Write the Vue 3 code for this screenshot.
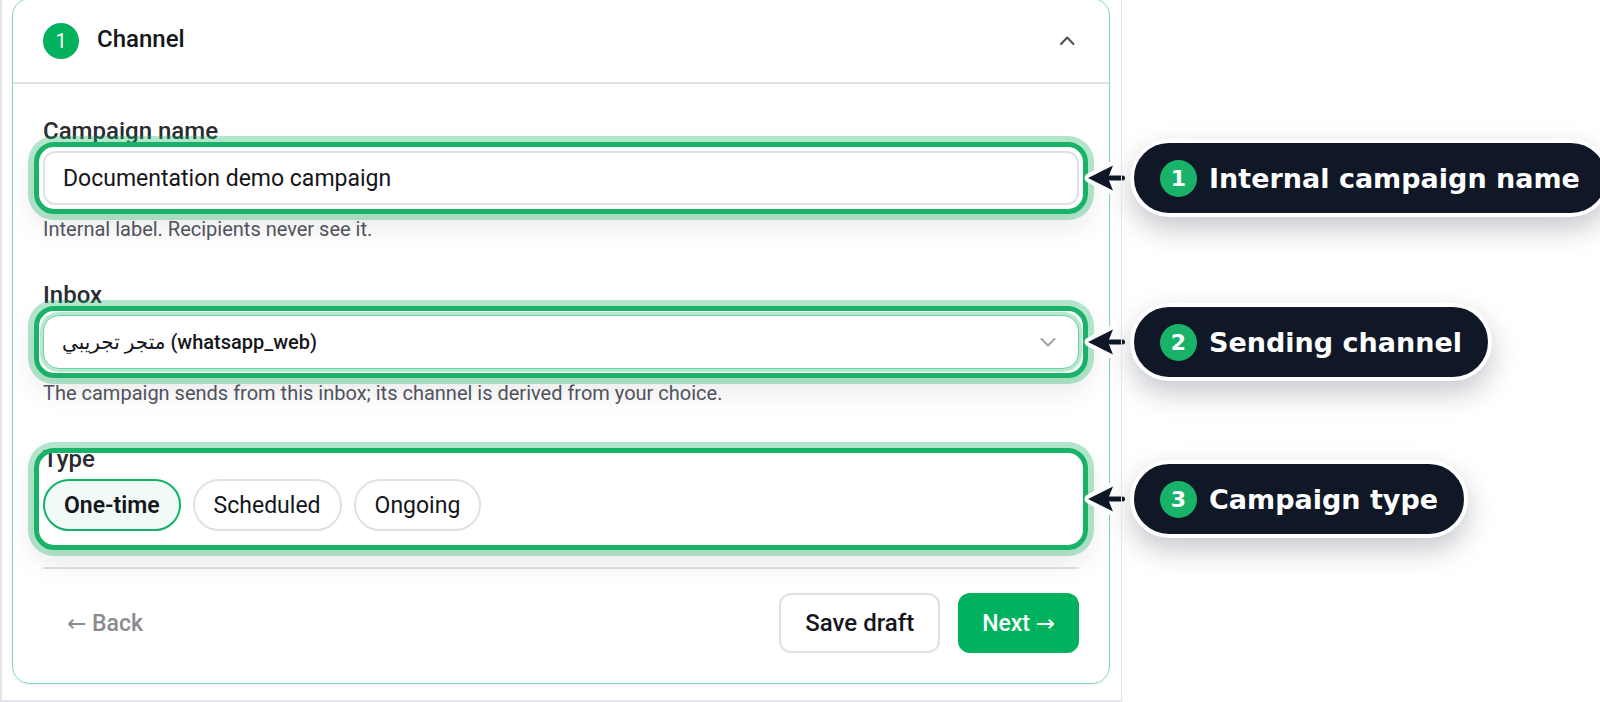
<script setup>
import { ref } from 'vue'

const name = ref('Documentation demo campaign')
const inbox = ref('whatsapp_web')
const type = ref('One-time')
const types = ['One-time', 'Scheduled', 'Ongoing']
const callouts = ['Internal campaign name', 'Sending channel', 'Campaign type']
</script>

<template>
  <div class="page">
    <main class="frame">
      <section class="card">
        <header class="card-header">
          <span class="step">1</span>
          <h2>Channel</h2>
          <button type="button" class="toggle" aria-label="Collapse">
            <svg width="24" height="24" viewBox="0 0 24 24" aria-hidden="true">
              <path d="M6 15 12.200 8.500l6.200 6.500" />
            </svg>
          </button>
        </header>

        <form class="card-body" @submit.prevent>
          <div class="field">
            <label for="name">Campaign name</label>
            <div class="marked">
              <input id="name" v-model="name" type="text" class="control" />
              <div class="ring">
                <div class="callout">
                  <svg class="arrow" width="47" height="36" viewBox="0 0 47 36" aria-hidden="true">
                    <path class="halo" d="M6 18 29 6l-4 12 4 12z M25 18h15" />
                    <path class="head" d="M5 18 30 5.500l-5 12.500 5 12.500z" />
                    <path class="shaft" d="M24 18h15.500" />
                  </svg>
                  <div class="pill"><b>1</b>{{ callouts[0] }}</div>
                </div>
              </div>
            </div>
            <p>Internal label. Recipients never see it.</p>
          </div>

          <div class="field">
            <label for="inbox">Inbox</label>
            <div class="marked">
              <select id="inbox" v-model="inbox" class="control select">
                <option value="whatsapp_web">متجر تجريبي (whatsapp_web)</option>
              </select>
              <svg class="caret" width="24" height="24" viewBox="0 0 24 24" aria-hidden="true">
                <path d="M5.500 9 12 15.500 18.500 9" />
              </svg>
              <div class="ring">
                <div class="callout">
                  <svg class="arrow" width="47" height="36" viewBox="0 0 47 36" aria-hidden="true">
                    <path class="halo" d="M6 18 29 6l-4 12 4 12z M25 18h15" />
                    <path class="head" d="M5 18 30 5.500l-5 12.500 5 12.500z" />
                    <path class="shaft" d="M24 18h15.500" />
                  </svg>
                  <div class="pill"><b>2</b>{{ callouts[1] }}</div>
                </div>
              </div>
            </div>
            <p>The campaign sends from this inbox; its channel is derived from your choice.</p>
          </div>

          <div class="marked" role="group" aria-labelledby="type-label">
            <span id="type-label" class="label">Type</span>
            <div class="chips">
              <button
                v-for="t in types"
                :key="t"
                type="button"
                class="chip"
                :class="{ active: t === type }"
                :aria-pressed="t === type"
                @click="type = t"
              >
                {{ t }}
              </button>
            </div>
            <div class="ring group-ring">
              <div class="callout">
                <svg class="arrow" width="47" height="36" viewBox="0 0 47 36" aria-hidden="true">
                  <path class="halo" d="M6 18 29 6l-4 12 4 12z M25 18h15" />
                  <path class="head" d="M5 18 30 5.500l-5 12.500 5 12.500z" />
                  <path class="shaft" d="M24 18h15.500" />
                </svg>
                <div class="pill"><b>3</b>{{ callouts[2] }}</div>
              </div>
            </div>
          </div>

          <footer class="actions">
            <button type="button" class="btn ghost">← Back</button>
            <button type="button" class="btn outline">Save draft</button>
            <button type="submit" class="btn primary">Next →</button>
          </footer>
        </form>
      </section>
    </main>
  </div>
</template>

<style>
body {
  background: #fff;
}
</style>

<style scoped>
* {
  box-sizing: border-box;
}
.page {
  padding-right: 478px;
  overflow: hidden;
  color: #14161b;
  font-family: Roboto, "Noto Sans", "DejaVu Sans", sans-serif;
  font-size: 23px;
}
.frame {
  position: relative;
  padding: 0 12px 18px;
}
.frame::after {
  content: "";
  position: absolute;
  inset: 0;
  border: 2px solid #e3e5ea;
  border-right-width: 1px;
  pointer-events: none;
}
.card {
  margin-top: -2px;
  border: 1px solid #7fdbab;
  border-radius: 18px;
  box-shadow: 0 1px 3px rgba(0, 0, 0, 0.06);
}
.card-header {
  display: flex;
  align-items: center;
  gap: 18px;
  height: 85px;
  padding: 0 30px;
  border-bottom: 2px solid #e0e2e8;
}
.step {
  width: 36px;
  border-radius: 50%;
  background: #00b25d;
  color: #fff;
  font-size: 20px;
  line-height: 36px;
  text-align: center;
}
h2 {
  flex: 1;
  margin: 0;
  padding-bottom: 4px;
  font-size: 24px;
  font-weight: 500;
  line-height: 32px;
}
.toggle {
  display: flex;
  padding: 0;
  border: 0;
  background: none;
}
svg path {
  fill: none;
  stroke: #4b4e55;
  stroke-width: 2;
  stroke-linecap: round;
  stroke-linejoin: round;
}
.card-body {
  padding: 32px 30px 30px;
}
.field {
  height: 164px;
}
label,
.label {
  display: block;
  color: #292b30;
  font-size: 24px;
  font-weight: 500;
  line-height: 30px;
}
.field label {
  margin-bottom: 5px;
}
.marked {
  position: relative;
}
.control {
  display: block;
  width: 100%;
  height: 54px;
  padding: 0 18px;
  border: 2px solid #e0e1e7;
  border-radius: 12px;
  outline: none;
  background: #fff;
  color: inherit;
  font: inherit;
}
.select {
  appearance: none;
  border: 1px solid #6fd3a1;
  border-radius: 16px;
  box-shadow: 0 0 0 3px #b5e8cd;
  font-size: 20px;
  font-weight: 500;
}
.caret {
  position: absolute;
  top: 15px;
  right: 19px;
  pointer-events: none;
}
.caret path {
  stroke: #a0a2a8;
}
.field p {
  margin: 9px 0 0;
  color: #53565f;
  font-size: 20px;
  line-height: 30px;
}

/* highlight around a field, with its callout on the right */
.ring {
  position: absolute;
  inset: -9px;
  border: 5px solid #18b368;
  border-radius: 20px;
  box-shadow: 0 0 0 6px rgba(24, 179, 104, 0.32), 0 12px 28px rgba(15, 23, 42, 0.1);
  pointer-events: none;
}
.group-ring {
  inset: 4px -9px -19px;
}
.callout {
  position: absolute;
  top: 50%;
  left: 100%;
  display: flex;
  align-items: center;
  transform: translateY(-50%);
}
.arrow {
  overflow: visible;
}
.arrow .halo {
  fill: #fff;
  stroke: #fff;
  stroke-width: 9;
}
.arrow .head {
  fill: #101828;
  stroke: none;
}
.arrow .shaft {
  stroke: #101828;
  stroke-width: 5;
}
.pill {
  display: flex;
  align-items: center;
  gap: 12px;
  height: 78px;
  padding: 0 26px;
  border: 4px solid #fff;
  border-radius: 39px;
  background: #101828;
  box-shadow: 0 12px 28px rgba(15, 23, 42, 0.24);
  color: #fff;
  font: bold 27px/37px "DejaVu Sans", sans-serif;
  white-space: nowrap;
}
.pill b {
  width: 37px;
  border-radius: 50%;
  background: #18b368;
  font-size: 22px;
  text-align: center;
}
.chips {
  display: flex;
  gap: 12px;
  margin-top: 5px;
}
.chip {
  height: 52px;
  padding: 0 19px;
  border: 2px solid #e0e1e7;
  border-radius: 26px;
  background: #fff;
  color: inherit;
  font: inherit;
}
.chip.active {
  border-color: #10b266;
  background: #f1faf6;
  font-weight: 600;
}
.actions {
  display: flex;
  align-items: center;
  gap: 18px;
  margin-top: 36px;
  padding-top: 24px;
  border-top: 2px solid #e0e1e7;
}
.btn {
  height: 60px;
  padding: 0 24px;
  border: 2px solid transparent;
  border-radius: 12px;
  background: none;
  color: inherit;
  font: inherit;
  font-weight: 500;
}
.ghost {
  margin-right: auto;
  padding: 0 22px;
  color: #8a8b8d;
}
.outline {
  border-color: #e0e1e7;
  font-size: 24px;
}
.primary {
  padding: 0 22px;
  border-color: #00b25d;
  background: #00b25d;
  color: #fff;
}
</style>
